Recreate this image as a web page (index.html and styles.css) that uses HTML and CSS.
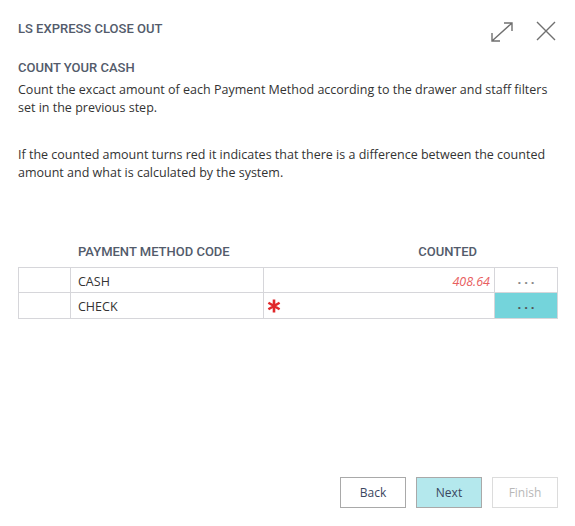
FILE: index.html
```html
<!DOCTYPE html>
<html>
<head>
<meta charset="utf-8">
<link rel="stylesheet" href="styles.css">
</head>
<body>
<div class="dialog">
  <header class="topbar">
    <div class="title">LS EXPRESS CLOSE OUT</div>
    <div class="tools">
      <svg class="icon" width="24" height="22" viewBox="0 0 24 22">
        <path d="M2 20 L22 2 M14 2 H22 V10 M2 12 V20 H10" fill="none" stroke="#707070" stroke-width="1.4"/>
      </svg>
      <svg class="icon" width="20" height="20" viewBox="0 0 20 20">
        <path d="M1 1 L19 19 M19 1 L1 19" fill="none" stroke="#707070" stroke-width="1.4"/>
      </svg>
    </div>
  </header>
  <h2 class="subtitle">COUNT YOUR CASH</h2>
  <p class="text">Count the excact amount of each Payment Method according to the drawer and staff filters set in the previous step.</p>
  <p class="text second">If the counted amount turns red it indicates that there is a difference between the counted amount and what is calculated by the system.</p>

  <div class="grid">
    <div class="row head">
      <div class="c c0"></div>
      <div class="c c1">PAYMENT METHOD CODE</div>
      <div class="c c2">COUNTED</div>
      <div class="c c3"></div>
    </div>
    <div class="row body first">
      <div class="c c0"></div>
      <div class="c c1">CASH</div>
      <div class="c c2"><span class="amount">408.64</span></div>
      <div class="c c3"><span class="dots light">···</span></div>
    </div>
    <div class="row body">
      <div class="c c0"></div>
      <div class="c c1">CHECK</div>
      <div class="c c2 req">
        <svg class="star" width="14" height="14" viewBox="0 0 14 14">
          <path d="M7 0.5 V13.5 M1.4 3.75 L12.6 10.25 M12.6 3.75 L1.4 10.25" stroke="#e0282a" stroke-width="2.6" fill="none"/>
        </svg>
      </div>
      <div class="c c3 active"><span class="dots">···</span></div>
    </div>
  </div>

  <footer class="actions">
    <button class="btn">Back</button>
    <button class="btn primary">Next</button>
    <button class="btn disabled">Finish</button>
  </footer>
</div>
</body>
</html>
```

FILE: styles.css
```css
html, body {
  margin: 0;
  padding: 0;
  background: #ffffff;
}
body {
  width: 575px;
  height: 526px;
  font-family: "Open Sans", "Noto Sans", sans-serif;
  color: #333;
}
.dialog {
  box-sizing: border-box;
  width: 575px;
  height: 526px;
  padding: 20px 17px 18px 18px;
  display: flex;
  flex-direction: column;
}
.topbar {
  display: flex;
  justify-content: space-between;
  align-items: flex-start;
  height: 28px;
}
.title, .subtitle, .head .c {
  font-family: Roboto, "DejaVu Sans Condensed", sans-serif;
  font-weight: 500;
  font-size: 13px;
  color: #535b6b;
  letter-spacing: 0;
}
.title {
  line-height: 18px;
}
.tools {
  display: flex;
  gap: 22px;
  padding-top: 1px;
  margin-right: 2px;
}
.subtitle {
  margin: 11px 0 0;
  line-height: 18px;
}
.text {
  margin: 4px 0 0;
  font-size: 12.5px;
  line-height: 18px;
  color: #333;
  width: 540px;
}
.text.second {
  margin-top: 29px;
}
.grid {
  margin-top: 57px;
  width: 540px;
}
.row {
  display: flex;
  height: 26px;
}
.row.head {
  height: 28px;
}
.row.head .c {
  border: none;
  line-height: 22px;
  padding-top: 2px;
}
.c {
  box-sizing: border-box;
  border-right: 1px solid #d6d6da;
  border-bottom: 1px solid #d6d6da;
  font-size: 12.5px;
  line-height: 24px;
  padding-top: 2px;
  color: #333;
  white-space: nowrap;
}
.c0 { width: 53px; border-left: 1px solid #d6d6da; }
.c1 { width: 193px; padding-left: 7px; }
.c2 { width: 231px; text-align: right; padding-right: 4px; }
.c3 { width: 63px; text-align: center; }
.row.head .c2 { padding-right: 18px; }
.row.body.first .c { border-top: 1px solid #d6d6da; height: 26px; }
.row.body.first { height: 26px; }
.amount {
  font-style: italic;
  color: #e8605f;
}
.req {
  display: flex;
  align-items: center;
  padding-left: 3px;
  padding-top: 1px;
}
.star { display: block; }
.active { background: #74d4db; }
.dots {
  color: #555;
  letter-spacing: 3px;
  margin-right: -3px;
  font-size: 13px;
  font-weight: bold;
}
.dots.light { color: #888; }
.actions {
  margin-top: auto;
  display: flex;
  justify-content: flex-end;
  gap: 10px;
}
.btn {
  box-sizing: border-box;
  width: 66px;
  height: 31px;
  border: 1px solid #a9a9a9;
  background: #fff;
  font-family: "Open Sans", "Noto Sans", sans-serif;
  font-size: 12px;
  color: #3a4660;
  padding: 0;
}
.btn.primary { background: #b4e8ed; }
.btn.disabled { border-color: #dcdcdc; color: #b8b8b8; }
```
